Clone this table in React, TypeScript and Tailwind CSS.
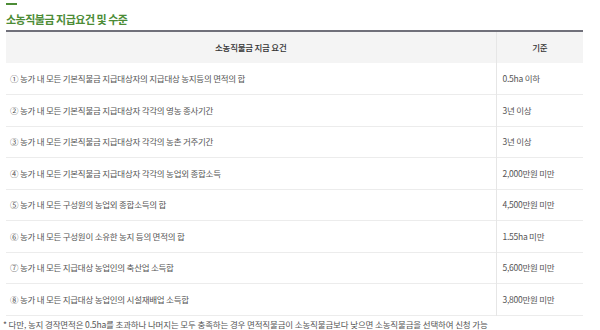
const rows: [string, string][] = [
  ['① 농가 내 모든 기본직불금 지급대상자의 지급대상 농지등의 면적의 합', '0.5ha 이하'],
  ['② 농가 내 모든 기본직불금 지급대상자 각각의 영농 종사기간', '3년 이상'],
  ['③ 농가 내 모든 기본직불금 지급대상자 각각의 농촌 거주기간', '3년 이상'],
  ['④ 농가 내 모든 기본직불금 지급대상자 각각의 농업외 종합소득', '2,000만원 미만'],
  ['⑤ 농가 내 모든 구성원의 농업외 종합소득의 합', '4,500만원 미만'],
  ['⑥ 농가 내 모든 구성원이 소유한 농지 등의 면적의 합', '1.55ha 미만'],
  ['⑦ 농가 내 모든 지급대상 농업인의 축산업 소득합', '5,600만원 미만'],
  ['⑧ 농가 내 모든 지급대상 농업인의 시설재배업 소득합', '3,800만원 미만'],
];

export default function App() {
  return (
    <div
      className="flex h-[330px] w-[600px] flex-col bg-white"
      style={{ fontFamily: '"Noto Sans CJK KR", "Noto Sans", sans-serif' }}
    >
      <div className="px-[6px] pt-[3px]">
        <div className="h-[2px] w-[11px] bg-[#4c8c36]" />
        <h2 className="mt-[6px] text-[11px] leading-[16px] font-bold tracking-[-0.5px] text-[#4c8c36]">
          소농직불금 지급요건 및 수준
        </h2>
      </div>
      <div className="mt-[3px] pl-[6px] pr-[17px]">
        <table className="w-full border-collapse border-t-2 border-[#70707a] text-[8.5px] tracking-[-0.25px]">
          <thead>
            <tr className="h-[32px] bg-[#f4f4f4] text-[#333]">
              <th className="font-medium">소농직불금 지급 요건</th>
              <th className="w-[87px] border-l border-[#e6e6e6] font-medium">기준</th>
            </tr>
          </thead>
          <tbody className="text-[#555]">
            {rows.map(([req, val]) => (
              <tr key={req} className="h-[31.5px] border-b border-[#ececec]">
                <td className="pl-[4px] text-left">{req}</td>
                <td className="border-l border-[#e6e6e6] pl-[6px] text-left">{val}</td>
              </tr>
            ))}
          </tbody>
        </table>
      </div>
      <p className="mt-[1px] pl-[3px] text-[8.5px] leading-[14px] tracking-[-0.15px] text-[#555]">
        * 다만, 농지 경작면적은 0.5ha를 초과하나 나머지는 모두 충족하는 경우 면적직불금이 소농직불금보다 낮으면 소농직불금을 선택하여 신청 가능
      </p>
    </div>
  );
}
